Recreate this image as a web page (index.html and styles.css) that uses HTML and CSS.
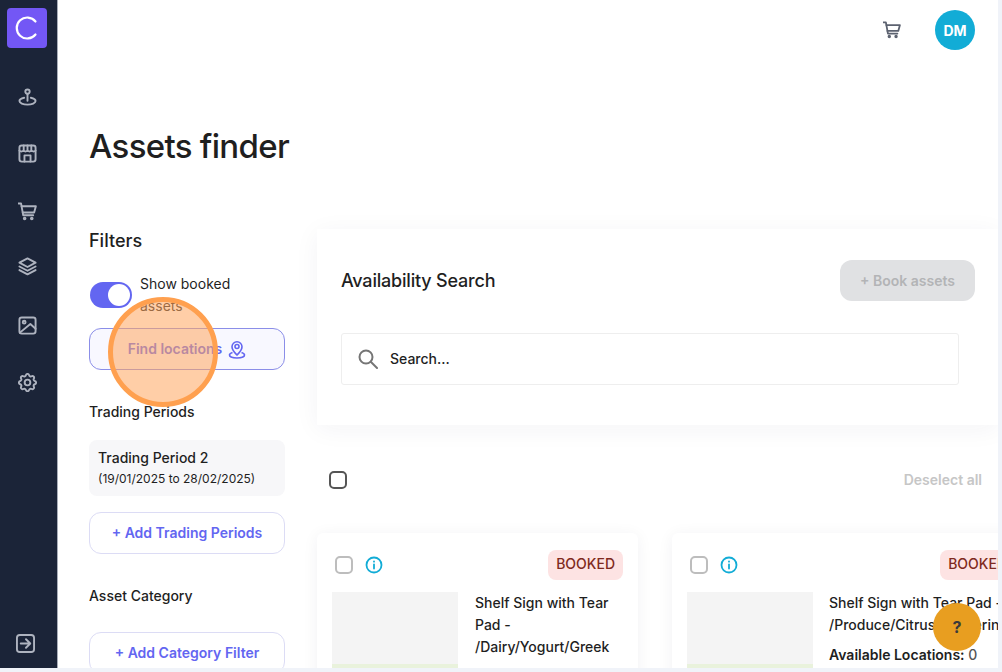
FILE: index.html
```html
<!DOCTYPE html>
<html lang="en">
<head>
    <meta charset="UTF-8">
    <meta name="viewport" content="width=device-width, initial-scale=1.0">
    <title>Assets finder</title>
    <link rel="stylesheet" href="styles.css">
</head>
<body>

    <div class="app">
        <!-- Left icon rail -->
        <nav class="sidebar">
            <div class="logo">
                <svg width="26" height="26" viewBox="0 0 26 26" fill="none" stroke="#fff" stroke-width="2.200" stroke-linecap="round"><path d="M21.500 6.500A10.500 10.500 0 1 0 21.500 19.500"/></svg>
            </div>
            <svg class="nav-icon pin" viewBox="0 0 20 20"><circle cx="10" cy="3.800" r="2.300"/><path d="M10 6.500v7"/><path d="M6.500 10.300C3.500 11 1.500 12.200 1.500 13.800c0 2 3.800 3.700 8.500 3.700s8.500-1.700 8.500-3.700c0-1.600-2-2.800-5-3.500"/></svg>
            <svg class="nav-icon store" viewBox="0 0 20 20"><rect x="1.500" y="1.500" width="17" height="17" rx="2.500"/><path d="M1.500 7c1.400 1.200 2.800 1.200 4.200 0 1.400 1.200 2.900 1.200 4.300 0 1.400 1.200 2.900 1.200 4.300 0 1.400 1.200 2.800 1.200 4.200 0"/><path d="M6 1.500V7M10 1.500V7M14 1.500V7"/><path d="M6.800 18.500v-6.500h6.400v6.500"/></svg>
            <svg class="nav-icon cart" viewBox="0 0 20 20"><path d="M.5 1.500h2.700l2.300 12.500h10.500"/><path d="M3.800 4.500h15l-1.800 6.500H5"/><circle cx="7" cy="17.300" r=".9"/><circle cx="14.500" cy="17.300" r=".9"/></svg>
            <svg class="nav-icon layers" viewBox="0 0 20 20"><path d="M10 1.500l8.500 4.500-8.500 4.500L1.500 6z"/><path d="M1.500 10l8.500 4.500 8.500-4.500"/><path d="M1.500 13.800l8.500 4.500 8.500-4.500"/></svg>
            <svg class="nav-icon image" viewBox="0 0 20 20"><rect x="1.500" y="1.500" width="17" height="17" rx="2.500"/><circle cx="6.500" cy="6.500" r="1.500"/><path d="M2 17.500L13 8.500l5.500 5"/></svg>
            <svg class="nav-icon gear" viewBox="2 2 20 20"><circle cx="12" cy="12" r="3"/><path d="M10.300 4.300c.4-1.800 3-1.800 3.400 0a1.700 1.700 0 0 0 2.600 1.100c1.500-.9 3.300.9 2.400 2.400a1.700 1.700 0 0 0 1 2.600c1.800.4 1.800 3 0 3.400a1.700 1.700 0 0 0-1 2.600c.9 1.500-.9 3.300-2.400 2.400a1.700 1.700 0 0 0-2.600 1c-.4 1.800-3 1.800-3.400 0a1.700 1.700 0 0 0-2.600-1c-1.500.9-3.300-.9-2.400-2.400a1.700 1.700 0 0 0-1-2.600c-1.800-.4-1.800-3 0-3.400a1.700 1.700 0 0 0 1-2.600c-.9-1.500.9-3.300 2.400-2.400a1.700 1.700 0 0 0 2.600-1.100z"/></svg>
            <svg class="nav-icon logout" viewBox="0 0 20 20"><rect x="1" y="1" width="18" height="18" rx="3"/><path d="M5 10h9.500M10.500 5.500L15 10l-4.500 4.500"/></svg>
        </nav>

        <main class="main">
            <header class="topbar">
                <svg class="top-cart" viewBox="0 0 20 20"><path d="M.5 1.500h2.700l2.300 12.500h10.500"/><path d="M3.800 4.500h15l-1.800 6.500H5"/><circle cx="7" cy="17.300" r=".9"/><circle cx="14.500" cy="17.300" r=".9"/></svg>
                <div class="avatar">DM</div>
            </header>

            <h1 class="page-title">Assets finder</h1>

            <div class="columns">
                <!-- Filters column -->
                <aside class="filters">
                    <h2 class="filters-title">Filters</h2>
                    <div class="toggle-row">
                        <span class="toggle"><span class="toggle-knob"></span></span>
                        <span class="toggle-label">Show booked assets</span>
                    </div>
                    <button class="btn-find"><span class="btn-label">Find locations</span>
                        <svg class="find-icon" viewBox="0 0 20 20"><circle cx="10" cy="6.500" r="2"/><path d="M10 15c-2-2-5-4.500-5-8.200a5 5 0 0 1 10 0C15 10.500 12 13 10 15z"/><path d="M5.500 12.500C3.500 13.200 2.500 14 2.500 15c0 1.700 3.400 3 7.500 3s7.500-1.300 7.500-3c0-1-1-1.800-3-2.500"/></svg>
                    </button>
                    <h3 class="filter-heading">Trading Periods</h3>
                    <div class="period">
                        <div class="period-name">Trading Period 2</div>
                        <div class="period-dates">(19/01/2025 to 28/02/2025)</div>
                    </div>
                    <button class="btn-add">+ Add Trading Periods</button>
                    <h3 class="filter-heading category-heading">Asset Category</h3>
                    <button class="btn-add category-btn">+ Add Category Filter</button>
                </aside>

                <!-- Results column -->
                <section class="results">
                    <div class="search-card">
                        <div class="search-head">
                            <h2 class="search-title">Availability Search</h2>
                            <button class="btn-book">+ Book assets</button>
                        </div>
                        <div class="search-box">
                            <svg class="search-icon" viewBox="0 0 20 20"><circle cx="8" cy="8" r="6.500"/><path d="M13 13l6 6"/></svg>
                            <span class="search-text">Search...</span>
                        </div>
                    </div>

                    <div class="select-row">
                        <span class="select-all"></span>
                        <span class="deselect">Deselect all</span>
                    </div>

                    <div class="cards">
                        <article class="card">
                            <div class="card-head">
                                <span class="check"></span>
                                <svg class="info" viewBox="0 0 18 18"><circle cx="9" cy="9" r="7.500"/><path d="M9 8.500v4"/><path d="M9 5.300v.4"/></svg>
                                <span class="badge">BOOKED</span>
                            </div>
                            <div class="card-body">
                                <div class="thumb"><div class="thumb-strip"></div></div>
                                <div class="card-text">Shelf Sign with Tear Pad - /Dairy/Yogurt/Greek</div>
                            </div>
                        </article>
                        <article class="card card-wide">
                            <div class="card-head">
                                <span class="check"></span>
                                <svg class="info" viewBox="0 0 18 18"><circle cx="9" cy="9" r="7.500"/><path d="M9 8.500v4"/><path d="M9 5.300v.4"/></svg>
                                <span class="badge">BOOKED</span>
                            </div>
                            <div class="card-body">
                                <div class="thumb"><div class="thumb-strip"></div></div>
                                <div class="card-text">Shelf Sign with Tear Pad - /Produce/Citrus/Tangerine
                                    <p class="locations"><b>Available Locations:</b> 0</p>
                                </div>
                            </div>
                        </article>
                    </div>
                </section>
            </div>
        </main>
    </div>

    <!-- Overlays -->
    <div class="click-marker"></div>
    <div class="help">?</div>

</body>
</html>
```

FILE: styles.css
```css
html, body {
    height: 100%;
    margin: 0;
    overflow: hidden;
}

body {
    background-color: #f0f3f9;
    font-family: Inter, "Liberation Sans", sans-serif;
    color: #1f1f1f;
}

.app {
    display: flex;
    width: 998px;
    height: 668px;
    overflow: hidden;
    background-color: #fff;
}

/* Sidebar */
.sidebar {
    flex: none;
    width: 58px;
    box-sizing: border-box;
    padding: 8px 3px 15px 0;
    display: flex;
    flex-direction: column;
    align-items: center;
    background-color: #1b2438;
    border-right: 1px solid #a8adb8;
}

.logo {
    flex: none;
    width: 40px;
    height: 40px;
    border-radius: 4px;
    background-color: #7357f5;
    display: flex;
    align-items: center;
    justify-content: center;
}

.nav-icon {
    width: 19px;
    height: 19px;
    flex: none;
    fill: none;
    stroke: #aeb3bf;
    stroke-width: 2;
    stroke-linecap: round;
    stroke-linejoin: round;
}

.pin { margin-top: 40px; }
.store { margin-top: 37px; }
.cart { margin-top: 39px; }
.layers { margin-top: 36px; }
.image { margin-top: 40px; }
.gear { margin-top: 38px; }
.logout { margin-top: auto; margin-right: 3px; }

/* Main area */
.main {
    flex: 1;
    min-width: 0;
    padding-left: 31px;
    overflow: hidden;
}

.topbar {
    height: 60px;
    display: flex;
    align-items: center;
    justify-content: flex-end;
    gap: 34px;
    padding-right: 23px;
}

.top-cart {
    width: 18px;
    height: 18px;
    fill: none;
    stroke: #5c6270;
    stroke-width: 2;
    stroke-linecap: round;
    stroke-linejoin: round;
}

.avatar {
    width: 40px;
    height: 40px;
    border-radius: 50%;
    background-color: #12acd6;
    color: #fff;
    font-size: 14px;
    font-weight: 700;
    display: flex;
    align-items: center;
    justify-content: center;
}

.page-title {
    margin: 61px 0 0;
    font-size: 33px;
    line-height: 50px;
    font-weight: 500;
    letter-spacing: -.7px;
}

.columns {
    display: flex;
    gap: 32px;
    margin-top: 58px;
}

/* Filters */
.filters {
    flex: none;
    width: 196px;
    padding-top: 1px;
}

.filters-title {
    margin: 0;
    font-size: 18px;
    line-height: 22px;
    font-weight: 500;
}

.toggle-row {
    display: flex;
    align-items: flex-start;
    gap: 8px;
    margin-top: 21px;
    height: 53px;
}

.toggle {
    flex: none;
    width: 42px;
    height: 26px;
    margin-top: 9px;
    margin-left: 1px;
    box-sizing: border-box;
    padding: 2px;
    border-radius: 13px;
    background-color: #6366f1;
    display: flex;
    justify-content: flex-end;
}

.toggle-knob {
    width: 22px;
    height: 22px;
    border-radius: 50%;
    background-color: #fff;
}

.toggle-label {
    width: 110px;
    font-size: 14px;
    line-height: 22px;
}

.btn-find,
.btn-add {
    display: flex;
    align-items: center;
    justify-content: center;
    box-sizing: border-box;
    width: 100%;
    height: 42px;
    padding-bottom: 2px;
    border-radius: 12px;
    font-family: inherit;
    font-size: 14px;
    font-weight: 600;
    color: #6366f1;
}

.btn-find {
    margin-top: 2px;
    gap: 6px;
    background-color: #f8f8ff;
    border: 1px solid #8b8ee8;
}

.btn-label {
    margin-left: 1px;
}

.find-icon {
    width: 20px;
    height: 20px;
    flex: none;
    margin-left: -1px;
    margin-bottom: -2px;
    fill: none;
    stroke: #6366f1;
    stroke-width: 1.600;
}

.btn-add {
    background-color: #fff;
    border: 1px solid #dcdcf5;
}

.filter-heading {
    margin: 33px 0 0;
    font-size: 14px;
    line-height: 17px;
    font-weight: 500;
}

.period {
    margin-top: 20px;
    height: 56px;
    box-sizing: border-box;
    padding: 8px 9px;
    border-radius: 8px;
    background-color: #f7f7f9;
}

.period-name {
    font-size: 14px;
    line-height: 20px;
    font-weight: 500;
}

.period-dates {
    margin-top: 2px;
    font-size: 12px;
    line-height: 18px;
}

.period + .btn-add {
    margin-top: 16px;
}

.category-heading {
    margin-top: 33px;
}

.category-btn {
    margin-top: 28px;
}

/* Results */
.results {
    flex: 1;
    min-width: 0;
}

.search-card {
    box-sizing: border-box;
    height: 196px;
    padding: 31px 23px 0 24px;
    background-color: #fff;
    box-shadow: 0 4px 24px rgba(30, 40, 70, .05);
}

.search-head {
    display: flex;
    align-items: center;
    justify-content: space-between;
}

.search-title {
    margin: 0;
    font-size: 18px;
    font-weight: 500;
    letter-spacing: -.2px;
}

.btn-book {
    width: 135px;
    height: 41px;
    border: 0;
    border-radius: 12px;
    background-color: #e0e1e3;
    color: #b3b4b6;
    font-family: inherit;
    font-size: 14px;
    font-weight: 600;
}

.search-box {
    display: flex;
    align-items: center;
    gap: 12px;
    width: 618px;
    height: 52px;
    box-sizing: border-box;
    margin-top: 32px;
    padding-left: 16px;
    border: 1px solid #eeeeee;
    border-radius: 3px;
    font-size: 14px;
    font-weight: 500;
}

.search-text {
    margin-bottom: 2px;
}

.search-icon {
    width: 20px;
    height: 20px;
    fill: none;
    stroke: #757575;
    stroke-width: 2;
    stroke-linecap: round;
}

.select-row {
    display: flex;
    align-items: center;
    justify-content: space-between;
    height: 18px;
    margin-top: 46px;
    padding: 0 16px 0 12px;
}

.select-all {
    width: 18px;
    height: 18px;
    box-sizing: border-box;
    border: 2px solid #555;
    border-radius: 5px;
}

.deselect {
    margin-bottom: 2px;
    font-size: 14px;
    font-weight: 600;
    color: #c6c6c6;
}

.cards {
    display: flex;
    gap: 34px;
    margin-top: 44px;
}

.card {
    flex: none;
    width: 321px;
    height: 200px;
    box-sizing: border-box;
    padding: 17px 15px 0;
    border-radius: 6px;
    background-color: #fff;
    box-shadow: 0 2px 16px rgba(30, 40, 70, .06);
}

.card-wide {
    width: 358px;
}

.card-wide .card-body {
    gap: 16px;
}

.card-head {
    display: flex;
    align-items: center;
    height: 30px;
}

.check {
    width: 18px;
    height: 18px;
    margin-left: 3px;
    box-sizing: border-box;
    border: 2px solid #bdbdbd;
    border-radius: 5px;
}

.info {
    width: 18px;
    height: 18px;
    margin-left: 12px;
    fill: none;
    stroke: #12acd6;
    stroke-width: 1.800;
    stroke-linecap: round;
}

.badge {
    margin-left: auto;
    height: 30px;
    padding: 0 8px;
    border-radius: 8px;
    background-color: #fde3e3;
    color: #7f2a20;
    font-size: 14px;
    font-weight: 500;
    line-height: 28px;
}

.card-body {
    display: flex;
    gap: 17px;
    margin-top: 12px;
}

.thumb {
    flex: none;
    width: 126px;
    height: 120px;
    padding-top: 72px;
    box-sizing: border-box;
    background-color: #f4f4f4;
}

.thumb-strip {
    height: 48px;
    background-color: #e9f2dc;
}

.card-text {
    flex: 1;
    font-size: 14px;
    line-height: 22px;
    font-weight: 500;
    min-width: 0;
}

.locations {
    margin: 8px 0 0;
    white-space: nowrap;
    color: #555;
}

.locations b {
    color: #1f1f1f;
    font-weight: 600;
}

/* Overlays */
.click-marker {
    position: absolute;
    left: 108px;
    top: 297px;
    width: 110px;
    height: 110px;
    box-sizing: border-box;
    border: 5px solid #ffa04f;
    border-radius: 50%;
    background-color: rgba(255, 165, 95, .55);
}

.help {
    position: absolute;
    left: 933px;
    top: 603px;
    width: 48px;
    height: 48px;
    border-radius: 50%;
    background-color: #e89e20;
    color: #3a3a3a;
    font-size: 16px;
    font-weight: 700;
    display: flex;
    align-items: center;
    justify-content: center;
}
```
